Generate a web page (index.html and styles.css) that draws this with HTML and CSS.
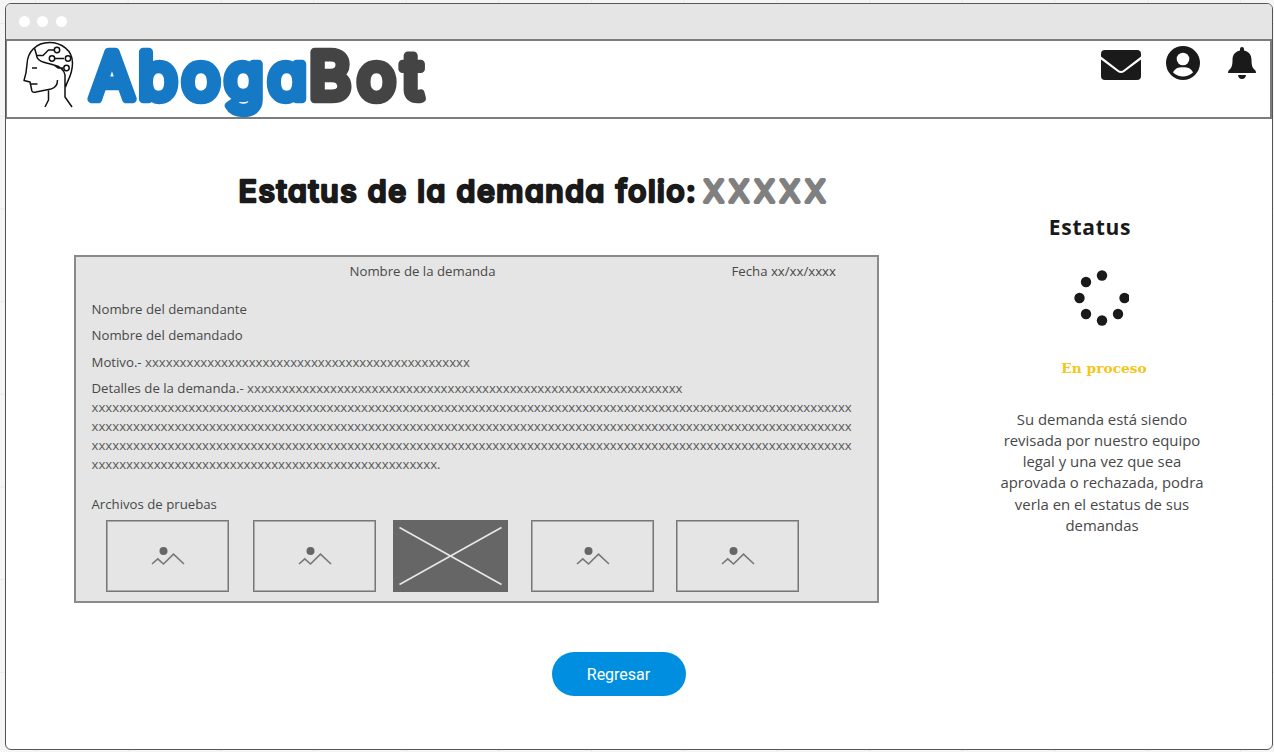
FILE: index.html
```html
<!DOCTYPE html>
<html lang="es">
<head>
<meta charset="utf-8">
<title>AbogaBot</title>
<link rel="stylesheet" href="styles.css">
</head>
<body>
<svg class="defs" width="0" height="0" aria-hidden="true">
  <symbol id="picture" viewBox="0 0 34 20">
    <circle cx="12.5" cy="5" r="4" fill="#666"/>
    <path d="M1 18 6.8 12.8 12.5 18 22.5 8.2 33 18" fill="none" stroke="#777" stroke-width="1.6"/>
  </symbol>
</svg>
<div class="window">
  <div class="titlebar"><i class="dot"></i><i class="dot"></i><i class="dot"></i></div>
  <header class="header">
    <svg class="head-icon" viewBox="0 0 52 68" fill="none" stroke="#111" stroke-width="1.5" stroke-linejoin="round">
      <path d="M22 66 25.500 59V48.500M49 66 42 56V34C41 28 37 25.500 31 24C22 21.500 14 21 13.500 14L11.500 7M42.500 46C45 38 49.500 34 49.500 22C49.500 9 38 1.500 26.500 1.500C13 1.500 4.500 11 4 23C3.500 31 3.500 32 1 39.500L7 41L8.500 48C8.500 51 10 51.500 13 51L28 48C32 47 34.500 44 34.500 39M7.500 43H14.500M9 27H14M13.500 14.500H20L25.500 9H31M31 17.500H41M31 24 35 27H40.500"/>
      <circle cx="34" cy="9" r="2.700"/><circle cx="29" cy="17.500" r="2.700"/><circle cx="45" cy="17.500" r="2.700"/><circle cx="43.500" cy="27" r="2.700"/>
    </svg>
    <svg class="wordmark" viewBox="0 0 346 78">
      <text class="brand brand-blue" x="6" y="58" textLength="217" lengthAdjust="spacing">Aboga</text>
      <text class="brand brand-gray" x="225" y="58" textLength="114" lengthAdjust="spacing">Bot</text>
    </svg>
    <nav class="actions">
      <svg class="mail" viewBox="0 0 40 30"><path fill="#1a1a1a" d="M4 0H36Q40 0 40 4V6.500L22.500 20Q20 22 17.500 20L0 6.500V4Q0 0 4 0ZM0 9.500 16.500 21.700Q20 24.300 23.500 21.700L40 9.500V26Q40 30 36 30H4Q0 30 0 26Z"/></svg>
      <svg class="user" viewBox="0 0 34 34"><circle cx="17" cy="17" r="17" fill="#1a1a1a"/><circle cx="17" cy="13" r="6.300" fill="#fff"/><path fill="#fff" d="M7 26.500C9 22.500 12 21.300 17 21.300S25 22.500 27 26.500C24 29.300 20.500 30.500 17 30.500S10 29.300 7 26.500Z"/></svg>
      <svg class="bell" viewBox="0 0 28 32"><path fill="#1a1a1a" d="M14 0Q16 0 16 2V3.500C21 4.500 23.500 8 23.500 13C23.500 19 24.500 21 27 23Q28 24 28 26H0Q0 24 1 23C3.500 21 4.500 19 4.500 13C4.500 8 7 4.500 12 3.500V2Q12 0 14 0ZM10 28H18Q17.500 32 14 32T10 28Z"/></svg>
    </nav>
  </header>
  <main class="main">
    <section class="detail">
      <svg class="heading" viewBox="0 0 600 44">
        <text class="title" x="1.500" y="32" textLength="457" lengthAdjust="spacing">Estatus de la demanda folio:</text>
        <text class="title folio" x="467" y="31.500" textLength="121" lengthAdjust="spacing">XXXXX</text>
      </svg>
      <article class="card">
        <div class="card-top"><span class="name">Nombre de la demanda</span><span class="date">Fecha xx/xx/xxxx</span></div>
        <p class="row">Nombre del demandante</p>
        <p class="row">Nombre del demandado</p>
        <p class="row">Motivo.- <span class="fill">xxxxxxxxxxxxxxxxxxxxxxxxxxxxxxxxxxxxxxxxxxxxxxx</span></p>
        <p class="text">Detalles de la demanda.- <span class="fill">xxxxxxxxxxxxxxxxxxxxxxxxxxxxxxxxxxxxxxxxxxxxxxxxxxxxxxxxxxxxxxx<br>xxxxxxxxxxxxxxxxxxxxxxxxxxxxxxxxxxxxxxxxxxxxxxxxxxxxxxxxxxxxxxxxxxxxxxxxxxxxxxxxxxxxxxxxxxxxxxxxxxxxxxxxxxxxxx<br>xxxxxxxxxxxxxxxxxxxxxxxxxxxxxxxxxxxxxxxxxxxxxxxxxxxxxxxxxxxxxxxxxxxxxxxxxxxxxxxxxxxxxxxxxxxxxxxxxxxxxxxxxxxxxx<br>xxxxxxxxxxxxxxxxxxxxxxxxxxxxxxxxxxxxxxxxxxxxxxxxxxxxxxxxxxxxxxxxxxxxxxxxxxxxxxxxxxxxxxxxxxxxxxxxxxxxxxxxxxxxxx<br>xxxxxxxxxxxxxxxxxxxxxxxxxxxxxxxxxxxxxxxxxxxxxxxxxx.</span></p>
        <p class="files-label">Archivos de pruebas</p>
        <div class="files">
          <div class="file"><svg class="pic"><use href="#picture"/></svg></div>
          <div class="file"><svg class="pic"><use href="#picture"/></svg></div>
          <div class="file crossed"><svg class="cross" viewBox="0 0 115 72"><path d="M6.500 7.500 108.500 64.500M6.500 64.500 108.500 7.500" stroke="#e6e6e6" stroke-width="1.700"/></svg></div>
          <div class="file"><svg class="pic"><use href="#picture"/></svg></div>
          <div class="file"><svg class="pic"><use href="#picture"/></svg></div>
        </div>
      </article>
      <button class="back">Regresar</button>
    </section>
    <aside class="status">
      <h2 class="status-title">Estatus</h2>
      <svg class="spinner" viewBox="0 0 55 56" fill="#1a1a1a"><circle cx="28" cy="5.500" r="5.200"/><circle cx="12" cy="12" r="5.200"/><circle cx="5.500" cy="28" r="5.200"/><circle cx="12" cy="44" r="5.200"/><circle cx="28" cy="50.500" r="5.200"/><circle cx="44" cy="44" r="5.200"/><circle cx="50.500" cy="28" r="5.200"/></svg>
      <p class="state">En proceso</p>
      <p class="message">Su demanda está siendo<br>revisada por nuestro equipo<br>legal y una vez que sea<br>aprovada o rechazada, podra<br>verla en el estatus de sus<br>demandas</p>
    </aside>
  </main>
</div>
</body>
</html>
```
FILE: styles.css
```css
* { box-sizing: border-box; }
body {
  margin: 0;
  height: 752px;
  padding: 3px 1px 2px 5px;
  overflow: hidden;
  background-color: #f5f5f5;
  background-image: linear-gradient(#e9e9e9 1px, transparent 1px), linear-gradient(90deg, #e9e9e9 1px, transparent 1px);
  background-size: 92.7px 92.7px;
  background-position: 35px 23px;
  font-family: "Open Sans", sans-serif;
  color: #484848;
}
svg { display: block; }
p, h2 { margin: 0; }
.defs { position: absolute; }
.window {
  height: 747px;
  background: #fff;
  border: 1px solid #555;
  border-radius: 6px;
  overflow: hidden;
}
.titlebar {
  height: 35px;
  background: #e5e5e5;
  display: flex;
  align-items: center;
  gap: 7.5px;
  padding-left: 12.500px;
}
.dot { width: 11px; height: 11px; border-radius: 50%; background: #fff; }
.header {
  height: 80px;
  border: 2px solid #7c7c7c;
  border-left-width: 1px;
  display: flex;
  align-items: flex-start;
}
.head-icon { width: 52px; height: 68px; margin: 0 0 0 16px; flex: none; }
.wordmark { width: 346px; height: 78px; margin-left: 9px; flex: none; overflow: visible; }
.brand {
  font: 400 64px Inter, sans-serif;
  font-feature-settings: "cv11";
  stroke-width: 8.5px;
  stroke-linejoin: round;
}
.brand-blue { fill: #1679c6; stroke: #1679c6; }
.brand-gray { fill: #444; stroke: #444; }
.actions { margin-left: auto; padding: 5px 14.500px 0 0; display: flex; align-items: flex-start; }
.mail { width: 40px; height: 30px; margin: 4px 25px 0 0; }
.user { width: 34px; height: 34px; margin-right: 28px; }
.bell { width: 28px; height: 32px; margin-top: 1px; }
.main { display: flex; padding-left: 68px; }
.detail { width: 805px; display: flex; flex-direction: column; }
.heading { width: 600px; height: 44px; margin: 51px 0 0 163px; overflow: visible; }
.title {
  font: 500 30.500px Inter, sans-serif;
  font-feature-settings: "cv11";
  fill: #1a1a1a;
  stroke: #1a1a1a;
  stroke-width: 2.6px;
  stroke-linejoin: round;
}
.folio { font-size: 29.500px; font-weight: 300; fill: #808080; stroke: #808080; stroke-width: 4px; }
.card {
  width: 805px;
  height: 348px;
  margin-top: 41px;
  border: 2px solid #8a8a8a;
  background: #e5e5e5;
  padding: 5px 15.500px 0;
  font-size: 13.210px;
}
.card-top { display: flex; line-height: 19px; padding-left: 258px; margin-bottom: 15px; }
.name { width: 382px; }
.row { line-height: 26.400px; white-space: nowrap; }
.fill { color: #5a5a5a; }
.text { line-height: 18.900px; margin-top: 4px; white-space: nowrap; }
.files-label { line-height: 19px; margin-top: 21px; }
.files { display: flex; margin: 6px 0 0 14.500px; }
.file {
  width: 123px;
  height: 72px;
  border: 1px solid #777;
  box-shadow: inset 0 0 0 1px #aaa;
  display: flex;
  align-items: center;
  justify-content: center;
  margin-right: 24px;
}
.file:nth-child(2) { margin-right: 17px; }
.file:nth-child(4) { margin-right: 22px; }
.crossed { width: 115px; border: 0; box-shadow: none; background: #666; margin-right: 23px; }
.pic { width: 34px; height: 20px; }
.cross { width: 115px; height: 72px; }
.back {
  width: 134px;
  height: 44px;
  margin: 49px 0 0 477.500px;
  border: 0;
  border-radius: 22px;
  background: #008fe0;
  color: #fff;
  font: 16px Roboto, sans-serif;
}
.status { width: 240px; margin-left: 103px; display: flex; flex-direction: column; align-items: center; text-align: center; }
.status-title { margin: 93px 0 0 -24px; font: 700 21px/30px "Open Sans", sans-serif; letter-spacing: .7px; color: #1a1a1a; }
.spinner { width: 55px; height: 56px; margin: 28px 0 0 -1px; }
.state { margin: 30px 0 0 4px; font: bold 13.800px/24px "DejaVu Serif", serif; color: #f5c518; }
.message { margin: 29px 0 0 0; font-size: 14.900px; line-height: 21.150px; white-space: nowrap; }
```
